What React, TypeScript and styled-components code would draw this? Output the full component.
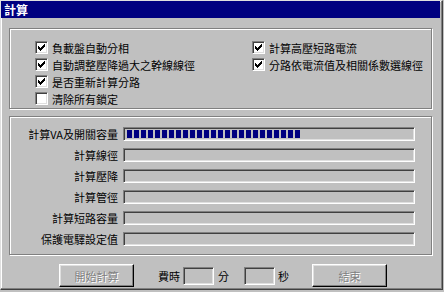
import React, {FC} from 'react';
import styled, {createGlobalStyle} from 'styled-components';

const GlobalStyle = createGlobalStyle`
	html, body {
		margin: 0;
		padding: 0;
		background: #c0c0c0;
	}
	body {
		font-family: "Noto Sans CJK TC", "Liberation Sans", sans-serif;
		font-size: 11px;
		color: #000;
	}
`;

const Window = styled.div`
	width: 443px;
	height: 290px;
	box-sizing: border-box;
	background: #c0c0c0;
	border-left: 1px solid #dfdfdf;
	border-top: 1px solid #dfdfdf;
	border-right: 1px solid #404040;
	border-bottom: 1px solid #404040;
	box-shadow: inset -1px -1px #808080, inset 1px 1px #fff;
	display: flex;
	flex-direction: column;
`;

const TitleBar = styled.div`
	height: 17px;
	margin: 0 2px 0 0;
	background: #000080;
	color: #fff;
	font-weight: bold;
	font-size: 12px;
	line-height: 17px;
	padding-left: 3px;
`;

const Body = styled.div`
	display: flex;
	flex-direction: column;
	padding: 5px 0 0 8px;
`;

const GroupBox = styled.div<{$height: number; $top: number}>`
	width: 423px;
	height: ${({$height}) => $height}px;
	margin-top: ${({$top}) => $top}px;
	box-sizing: border-box;
	border: 1px solid #808080;
	box-shadow: inset 1px 1px #fff, 1px 1px #fff;
`;

const OptionsGrid = styled.div`
	display: flex;
	padding: 10px 0 0 25px;
`;

const OptionColumn = styled.div<{$width?: number}>`
	display: flex;
	flex-direction: column;
	width: ${({$width}) => ($width ? `${$width}px` : 'auto')};
`;

const OptionRow = styled.label`
	display: flex;
	align-items: center;
	gap: 4px;
	height: 17px;
	white-space: nowrap;
`;

const Box = styled.span`
	width: 13px;
	height: 13px;
	box-sizing: border-box;
	background: #fff;
	border-style: solid;
	border-width: 1px;
	border-color: #808080 #fff #fff #808080;
	box-shadow: inset 1px 1px #404040, inset -1px -1px #dfdfdf;
	display: flex;
	align-items: center;
	justify-content: center;
	flex: none;
`;

const Check: FC<{checked: boolean}> = ({checked}) => (
	<Box>
		{checked && (
			<svg width="7" height="7" viewBox="0 0 7 7" shapeRendering="crispEdges">
				<path
					fill="#000"
					d="M6 0h1v1h-1z M5 1h2v1h-2z M0 2h1v1h-1z M4 2h3v1h-3z M0 3h2v1h-2z M3 3h3v1h-3z M0 4h5v1h-5z M1 5h3v1h-3z M2 6h1v1h-1z"
				/>
			</svg>
		)}
	</Box>
);

const ProgressList = styled.div`
	display: flex;
	flex-direction: column;
	gap: 7px;
	padding-top: 10px;
`;

const ProgressRow = styled.div`
	display: flex;
	align-items: center;
	height: 14px;
`;

const ProgressLabel = styled.span`
	width: 108px;
	text-align: right;
	margin-right: 5px;
	white-space: nowrap;
	line-height: 14px;
`;

const Bar = styled.div`
	width: 292px;
	height: 14px;
	box-sizing: border-box;
	border-style: solid;
	border-width: 1px;
	border-color: #808080 #fff #fff #808080;
	box-shadow: inset 1px 1px #404040, inset -1px -1px #dfdfdf;
	padding: 2px 3px;
	display: flex;
	gap: 2px;
`;

const Block = styled.span`
	width: 5px;
	height: 100%;
	background: #000080;
`;

const Footer = styled.div`
	display: flex;
	align-items: center;
	height: 23px;
	margin-top: 9px;
`;

const Button = styled.button<{$left: number}>`
	width: 75px;
	height: 23px;
	margin-left: ${({$left}) => $left}px;
	padding: 0;
	background: #c0c0c0;
	font-family: inherit;
	font-size: 11px;
	color: #808080;
	text-shadow: 1px 1px 0 #fff;
	border-style: solid;
	border-width: 1px;
	border-color: #fff #000 #000 #fff;
	box-shadow: inset -1px -1px #808080, inset 1px 1px #dfdfdf;
`;

const Caption = styled.span<{$left: number}>`
	margin-left: ${({$left}) => $left}px;
	white-space: nowrap;
`;

const TimeBox = styled.div<{$left: number}>`
	width: 31px;
	height: 18px;
	margin-left: ${({$left}) => $left}px;
	box-sizing: border-box;
	border-style: solid;
	border-width: 1px;
	border-color: #808080 #fff #fff #808080;
	box-shadow: inset 1px 1px #404040, inset -1px -1px #dfdfdf;
`;

const leftOptions = [
	{text: '負載盤自動分相', checked: true},
	{text: '自動調整壓降過大之幹線線徑', checked: true},
	{text: '是否重新計算分路', checked: true},
	{text: '清除所有鎖定', checked: false},
];

const rightOptions = [
	{text: '計算高壓短路電流', checked: true},
	{text: '分路依電流值及相關係數選線徑', checked: true},
];

const steps = [
	{label: '計算VA及開關容量', blocks: 25},
	{label: '計算線徑', blocks: 0},
	{label: '計算壓降', blocks: 0},
	{label: '計算管徑', blocks: 0},
	{label: '計算短路容量', blocks: 0},
	{label: '保護電驛設定值', blocks: 0},
];

export default function App() {
	return (
		<>
			<GlobalStyle />
			<Window>
				<TitleBar>計算</TitleBar>
				<Body>
					<GroupBox $height={81} $top={5}>
						<OptionsGrid>
							<OptionColumn $width={217}>
								{leftOptions.map(o => (
									<OptionRow key={o.text}>
										<Check checked={o.checked} />
										{o.text}
									</OptionRow>
								))}
							</OptionColumn>
							<OptionColumn>
								{rightOptions.map(o => (
									<OptionRow key={o.text}>
										<Check checked={o.checked} />
										{o.text}
									</OptionRow>
								))}
							</OptionColumn>
						</OptionsGrid>
					</GroupBox>
					<GroupBox $height={139} $top={7}>
						<ProgressList>
							{steps.map(s => (
								<ProgressRow key={s.label}>
									<ProgressLabel>{s.label}</ProgressLabel>
									<Bar>
										{Array.from({length: s.blocks}, (_, i) => (
											<Block key={i} />
										))}
									</Bar>
								</ProgressRow>
							))}
						</ProgressList>
					</GroupBox>
					<Footer>
						<Button $left={50} disabled>開始計算</Button>
						<Caption $left={24}>費時</Caption>
						<TimeBox $left={3} />
						<Caption $left={4}>分</Caption>
						<TimeBox $left={15} />
						<Caption $left={3}>秒</Caption>
						<Button $left={23} disabled>結束</Button>
					</Footer>
				</Body>
			</Window>
		</>
	);
}
